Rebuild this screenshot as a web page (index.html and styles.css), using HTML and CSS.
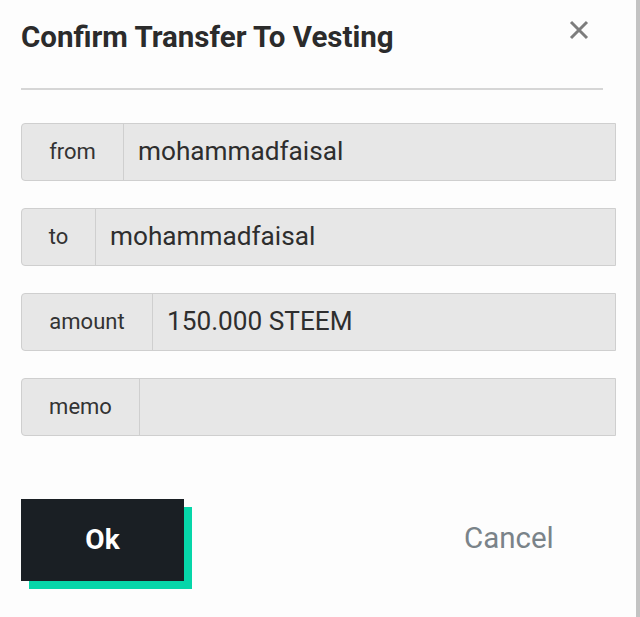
FILE: index.html
```html
<!DOCTYPE html>
<html>
<head>
<meta charset="utf-8">
<link rel="stylesheet" href="styles.css">
</head>
<body>
<div class="page">
  <div class="header">
    <h1 class="title">Confirm Transfer To Vesting</h1>
    <span class="close" aria-label="close">
      <svg width="20" height="20" viewBox="0 0 20 20"><path d="M2 2L18 18M18 2L2 18" stroke="#7d7d7d" stroke-width="3" fill="none"/></svg>
    </span>
  </div>
  <div class="divider"></div>
  <div class="fields">
    <div class="field"><span class="label lbl-from">from</span><span class="value">mohammadfaisal</span></div>
    <div class="field"><span class="label lbl-to">to</span><span class="value">mohammadfaisal</span></div>
    <div class="field"><span class="label lbl-amount">amount</span><span class="value">150.000 STEEM</span></div>
    <div class="field"><span class="label lbl-memo">memo</span><span class="value"></span></div>
  </div>
  <div class="actions">
    <button class="ok">Ok</button>
    <button class="cancel">Cancel</button>
  </div>
</div>
</body>
</html>
```
FILE: styles.css
```css
html, body {
  margin: 0;
  padding: 0;
  background: #fdfdfd;
}
body {
  font-family: Roboto, "Liberation Sans", sans-serif;
  color: #333;
}
.page {
  width: 640px;
  height: 617px;
  box-sizing: border-box;
  border-right: 4px solid #c3c3c3;
  overflow: hidden;
}
.header {
  display: flex;
  justify-content: space-between;
  align-items: flex-start;
  padding: 19px 47px 0 21px;
  height: 70px;
  box-sizing: border-box;
}
.title {
  margin: 0;
  font-size: 29.5px;
  font-weight: 700;
  color: #2b2b2b;
  line-height: 36px;
}
.close {
  display: block;
  width: 20px;
  height: 20px;
  margin-top: 1px;
}
.close svg { display: block; }
.divider {
  margin: 18px 0 0 21px;
  width: 582px;
  height: 2px;
  background: #d6d6d6;
}
.fields {
  display: flex;
  flex-direction: column;
  gap: 27px;
  margin: 33px 0 0 21px;
  width: 595px;
}
.field {
  display: flex;
  height: 58px;
  box-sizing: border-box;
  border: 1px solid #cfcfcf;
  border-radius: 4px 0 0 4px;
  background: #e7e7e7;
}
.label {
  display: flex;
  align-items: center;
  justify-content: center;
  box-sizing: border-box;
  border-right: 1px solid #cfcfcf;
  font-size: 22px;
  color: #333;
  padding-bottom: 2px;
}
.lbl-from { width: 102px; }
.lbl-to { width: 74px; }
.lbl-amount { width: 131px; }
.lbl-memo { width: 118px; }
.value {
  flex: 1;
  display: flex;
  align-items: center;
  padding-left: 14px;
  font-size: 26.2px;
  color: #2e2e2e;
  padding-bottom: 2px;
}
.actions {
  display: flex;
  align-items: center;
  margin: 63px 0 0 21px;
}
.ok {
  width: 163px;
  height: 82px;
  border: none;
  background: #1a1f24;
  color: #fff;
  font-family: Roboto, "Liberation Sans", sans-serif;
  font-size: 28px;
  font-weight: 700;
  box-shadow: 8px 8px 0 #06d6a9;
  padding: 0 0 2px 0;
  cursor: pointer;
}
.cancel {
  margin-left: 280px;
  border: none;
  background: none;
  padding: 0 0 4px 0;
  font-family: Roboto, "Liberation Sans", sans-serif;
  font-size: 29.5px;
  color: #7a8389;
  cursor: pointer;
}
```
